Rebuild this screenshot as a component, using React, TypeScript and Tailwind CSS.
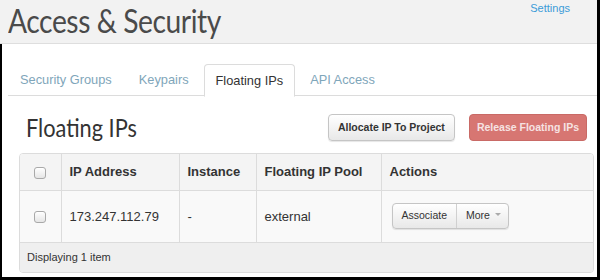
import { useState } from "react";

const rows = [{ ip: "173.247.112.79", instance: "-", pool: "external" }];

function Check() {
  return (
    <span className="inline-block align-middle w-[12px] h-[12px] rounded-[3px] border border-[#a9a9a9] bg-gradient-to-b from-white to-[#e6e6e6] shadow-[inset_0_1px_0_#fff]" />
  );
}

export default function App() {
  const [tab, setTab] = useState("Floating IPs");
  const tabs = ["Security Groups", "Keypairs", "Floating IPs", "API Access"];

  return (
    <div className="w-[600px] h-[280px] overflow-hidden bg-white border-r-[3px] border-b-[3px] border-black font-['Liberation_Sans',Arial,sans-serif] text-[13px] text-[#333]">
      <div className="h-[44px] bg-[#f2f2f2] border-b border-[#dedede] flex items-start justify-between pl-[8px] pr-[27px]">
        <h1 className="font-['Lato',sans-serif] text-[33px] leading-[40px] tracking-[-0.5px] text-[#4a4a4a] scale-x-[0.855] origin-left whitespace-nowrap">
          Access &amp; Security
        </h1>
        <a className="text-[11px] leading-[13px] text-[#3b9bd8] mt-[2px]">Settings</a>
      </div>

      <div className="h-[236px] border-l-2 border-black pl-[6px] pt-[20px]">
        <div className="flex h-[32px] border-b border-[#dcdcdc] text-[12.8px]">
          {tabs.map((t) => (
            <button
              key={t}
              onClick={() => setTab(t)}
              className={
                t === tab
                  ? "px-[11px] h-[33px] -mb-px mr-[3px] bg-white border border-b-white border-[#dcdcdc] rounded-t-[4px] text-[#333]"
                  : "px-[11px] h-[32px] border border-transparent text-[#7fa6ba] mr-[3px]"
              }
            >
              {t}
            </button>
          ))}
        </div>

        <div className="pl-[11px] pr-[3px]">
          <div className="flex items-center justify-between h-[57px] pt-[6px] pr-[7px]">
            <h2 className="font-['Lato',sans-serif] text-[25px] text-[#333] pl-[8px] scale-x-[0.87] origin-left whitespace-nowrap">
              Floating IPs
            </h2>
            <div className="flex gap-[14px]">
              <button className="h-[27px] px-[9px] rounded-[4px] border border-[#c5c5c5] bg-gradient-to-b from-white to-[#e8e8e8] font-bold text-[10.5px] text-[#333] shadow-[0_1px_1px_rgba(0,0,0,0.1)]">
                Allocate IP To Project
              </button>
              <button className="h-[27px] px-[7px] rounded-[4px] border border-[#c96a66] bg-[#d77672] font-bold text-[10.5px] text-[#f6e3e2]">
                Release Floating IPs
              </button>
            </div>
          </div>

          <div className="border border-[#dcdcdc] rounded-[4px] overflow-hidden">
            <table className="w-full table-fixed border-collapse">
              <thead>
                <tr className="h-[36px] bg-[#f4f4f4] text-left font-bold">
                  <th className="w-[41px] text-center border-r border-[#dcdcdc]"><Check /></th>
                  <th className="w-[118px] pl-[8px] border-r border-[#dcdcdc]">IP Address</th>
                  <th className="w-[77px] pl-[8px] border-r border-[#dcdcdc]">Instance</th>
                  <th className="w-[125px] pl-[8px] border-r border-[#dcdcdc]">Floating IP Pool</th>
                  <th className="pl-[8px]">Actions</th>
                </tr>
              </thead>
              <tbody>
                {rows.map((r) => (
                  <tr key={r.ip} className="h-[52px] bg-[#f9f9f9] border-t border-[#dcdcdc]">
                    <td className="text-center border-r border-[#dcdcdc]"><Check /></td>
                    <td className="pl-[8px] border-r border-[#dcdcdc]">{r.ip}</td>
                    <td className="pl-[8px] border-r border-[#dcdcdc]">{r.instance}</td>
                    <td className="pl-[8px] border-r border-[#dcdcdc]">{r.pool}</td>
                    <td className="pl-[10px]">
                      <div className="inline-flex h-[26px] rounded-[4px] border border-[#c5c5c5] bg-gradient-to-b from-white to-[#e8e8e8] shadow-[0_1px_1px_rgba(0,0,0,0.1)] text-[10.5px] text-[#333]">
                        <button className="px-[9px] border-r border-[#d0d0d0]">Associate</button>
                        <button className="pl-[9px] pr-[7px] flex items-center gap-[5px]">
                          More
                          <span className="w-0 h-0 border-l-[3px] border-r-[3px] border-t-[3px] border-l-transparent border-r-transparent border-t-[#aaa] mb-[3px]" />
                        </button>
                      </div>
                    </td>
                  </tr>
                ))}
              </tbody>
            </table>
            <div className="h-[30px] bg-[#efefef] border-t border-[#dcdcdc] pl-[7px] flex items-center text-[11px]">
              Displaying 1 item
            </div>
          </div>
        </div>
      </div>
    </div>
  );
}
